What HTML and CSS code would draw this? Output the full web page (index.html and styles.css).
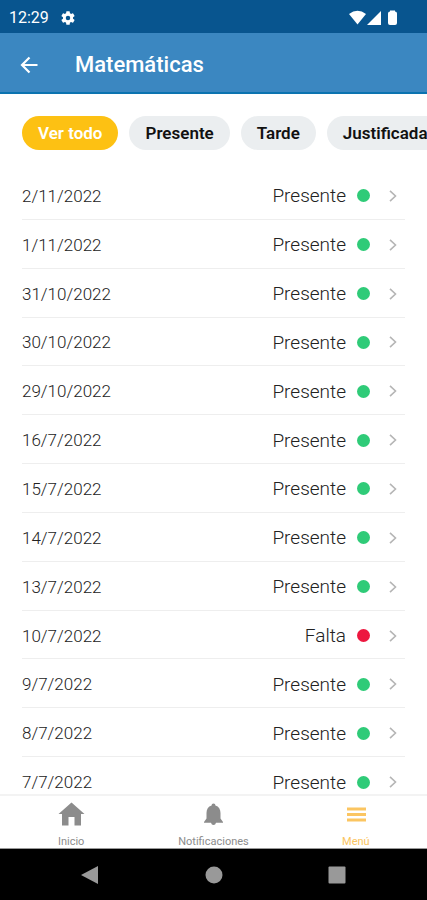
FILE: index.html
```
<!DOCTYPE html>
<html lang="es">
<head>
<meta charset="utf-8">
<meta name="viewport" content="width=device-width, initial-scale=1">
<title>Matemáticas</title>
<link rel="stylesheet" href="styles.css">
</head>
<body>
<div class="status-bar">
  <span class="clock">12:29</span>
  <svg class="gear" viewBox="2 2 20 20" aria-hidden="true"><path fill="#fff" d="M19.14 12.94c.04-.3.06-.61.06-.94 0-.32-.02-.64-.07-.94l2.03-1.58a.49.49 0 0 0 .12-.61l-1.92-3.32a.49.49 0 0 0-.59-.22l-2.39.96a7 7 0 0 0-1.62-.94l-.36-2.54a.48.48 0 0 0-.48-.41h-3.84a.47.47 0 0 0-.47.41l-.36 2.54c-.59.24-1.13.57-1.62.94l-2.39-.96a.48.48 0 0 0-.59.22L2.74 8.87a.47.47 0 0 0 .12.61l2.03 1.58a7.4 7.4 0 0 0-.02 1.88l-2.03 1.58a.49.49 0 0 0-.12.61l1.92 3.32c.12.22.37.29.59.22l2.39-.96c.5.38 1.03.7 1.62.94l.36 2.54c.05.24.24.41.48.41h3.84c.24 0 .44-.17.47-.41l.36-2.54a7 7 0 0 0 1.62-.94l2.39.96c.22.08.47 0 .59-.22l1.92-3.32a.47.47 0 0 0-.12-.61zM12 15.2a3.2 3.2 0 1 1 0-6.4 3.2 3.2 0 0 1 0 6.4z"/></svg>
  <svg class="signals" viewBox="0 0 50 16" aria-hidden="true"><g fill="#fff"><path d="M0 4Q8.500-2.500 17 4L8.500 14.500z"/><path d="M32 1V15H18z"/><path d="M41 1.500V.5h5v1q2 0 2 2V13q0 2-2 2h-5q-2 0-2-2V3.500q0-2 2-2z"/></g></svg>
</div>
<header class="app-bar">
  <button class="back" type="button" aria-label="Volver"><svg viewBox="0 0 18 18" aria-hidden="true"><path d="M17.500 9H2M9.500 1.500 2 9l7.500 7.500" fill="none" stroke="#fff" stroke-width="2.200"/></svg></button>
  <h1>Matemáticas</h1>
</header>
<main class="content">
  <div class="filters">
    <button class="chip active" type="button">Ver todo</button>
    <button class="chip" type="button">Presente</button>
    <button class="chip" type="button">Tarde</button>
    <button class="chip" type="button">Justificada</button>
  </div>
  <ul class="records"></ul>
</main>
<nav class="tabs">
  <a href="#inicio"><svg viewBox="0 0 28 28" aria-hidden="true"><path fill="currentColor" d="M14.500 2.500 1.500 14H5v11.500h6.500V17h6v8.500H24V14h3.500z"/></svg>Inicio</a>
  <a href="#notificaciones"><svg viewBox="0 0 28 28" aria-hidden="true"><path fill="currentColor" d="M14.500 3.500c1.200 0 1.900.8 1.900 2 3.500 1 5.100 3.800 5.100 7.500v5.500l2.500 3.500v.8H5V22l2.500-3.500V13c0-3.700 1.600-6.500 5.100-7.500 0-1.200.7-2 1.900-2zM12 22.800h5q-.5 2.200-2.500 2.200T12 22.800z"/></svg>Notificaciones</a>
  <a class="current" href="#menu"><svg viewBox="0 0 28 28" aria-hidden="true"><path d="M5 9h19M5 14.500h19M5 20h19" stroke="currentColor" stroke-width="3"/></svg>Menú</a>
</nav>
<div class="system-nav">
  <button type="button" aria-label="Atrás"><svg viewBox="0 0 18 18" aria-hidden="true"><path fill="#999" d="M17 0v18L0 9z"/></svg></button>
  <button type="button" aria-label="Pantalla de inicio"><svg viewBox="0 0 18 18" aria-hidden="true"><circle cx="9" cy="9" r="8.500" fill="#999"/></svg></button>
  <button type="button" aria-label="Recientes"><svg viewBox="0 0 18 18" aria-hidden="true"><rect x=".5" y=".5" width="17" height="17" rx="1" fill="#999"/></svg></button>
</div>
<script src="script.js"></script>
</body>
</html>
```
FILE: styles.css
```
* { box-sizing: border-box; }
body {
  margin: 0;
  height: 100vh;
  display: flex;
  flex-direction: column;
  overflow: hidden;
  background: #fff;
  color: #333;
  font-family: Roboto, "Liberation Sans", sans-serif;
}
button { border: 0; padding: 0; background: none; font: inherit; cursor: pointer; }
svg { display: block; flex: none; }
.status-bar {
  flex: none;
  display: flex;
  align-items: center;
  height: 33px;
  padding: 2px 28px 0 9px;
  background: #08558f;
  color: #fff;
  font-size: 16px;
}
.gear { width: 14px; height: 14px; margin-left: 12px; }
.signals { width: 50px; height: 16px; margin-left: auto; }
.app-bar {
  flex: none;
  display: flex;
  align-items: center;
  gap: 37px;
  height: 61px;
  padding: 4px 20px 0;
  background: #3b87c1;
  border-bottom: 2px solid #0b73b0;
}
.back svg { width: 18px; height: 18px; }
.app-bar h1 { margin: 0; color: #fff; font-size: 22px; line-height: 28px; font-weight: 500; }
.content { flex: 1; min-height: 0; display: flex; flex-direction: column; overflow: hidden; }
.filters { flex: none; display: flex; gap: 11px; padding: 22px 0 21px 22px; overflow: hidden; }
.chip {
  flex: none;
  height: 34px;
  padding: 0 16px;
  border-radius: 17px;
  background: #ebeef0;
  color: #111;
  font-size: 17px;
  font-weight: 600;
}
.chip.active { background: #fdc113; color: #fff; }
.records {
  flex: 1;
  display: grid;
  grid-auto-rows: minmax(48px, 1fr);
  margin: 0 22px -12px;
  padding: 0;
  list-style: none;
}
.records li { border-bottom: 1px solid #eee; }
.records a {
  display: flex;
  align-items: center;
  height: 100%;
  padding: 2px 8px 0 0;
  color: #222;
  font-weight: 300;
  text-decoration: none;
}
.date { font-size: 17px; }
.state { margin-left: auto; font-size: 19px; }
.dot { width: 13px; height: 13px; margin: 0 19px 0 11px; border-radius: 50%; background: #2fcb78; }
.dot.absent { background: #ed173f; }
.chevron { width: 8px; height: 12px; }
.tabs {
  flex: none;
  display: flex;
  height: 55px;
  border-top: 2px solid #f3f3f3;
  border-bottom: 1px solid #999;
  background: #fff;
}
.tabs a {
  flex: 1;
  display: flex;
  flex-direction: column;
  align-items: center;
  gap: 7px;
  padding-top: 4px;
  color: #8c8c8c;
  font-size: 11px;
  line-height: 14px;
  text-decoration: none;
}
.tabs svg { width: 28px; height: 28px; }
.tabs .current { color: #fbc561; }
.system-nav {
  flex: none;
  display: flex;
  justify-content: space-between;
  align-items: center;
  height: 51px;
  padding: 0 81px;
  background: #000;
}
.system-nav svg { width: 18px; height: 18px; }
```
FILE: script.js
```
const records = [
  ["2/11/2022", "Presente"], ["1/11/2022", "Presente"], ["31/10/2022", "Presente"],
  ["30/10/2022", "Presente"], ["29/10/2022", "Presente"], ["16/7/2022", "Presente"],
  ["15/7/2022", "Presente"], ["14/7/2022", "Presente"], ["13/7/2022", "Presente"],
  ["10/7/2022", "Falta"], ["9/7/2022", "Presente"], ["8/7/2022", "Presente"],
  ["7/7/2022", "Presente"]
];
document.querySelector(".records").innerHTML = records.map(([date, state]) => `
  <li><a href="#detalle">
    <span class="date">${date}</span>
    <span class="state">${state}</span>
    <span class="dot${state === "Falta" ? " absent" : ""}"></span>
    <svg class="chevron" viewBox="0 0 8 12" aria-hidden="true"><path d="M1 .8 6.500 6 1 11.200" fill="none" stroke="#b5b5b5" stroke-width="1.600"/></svg>
  </a></li>`).join("");
```
